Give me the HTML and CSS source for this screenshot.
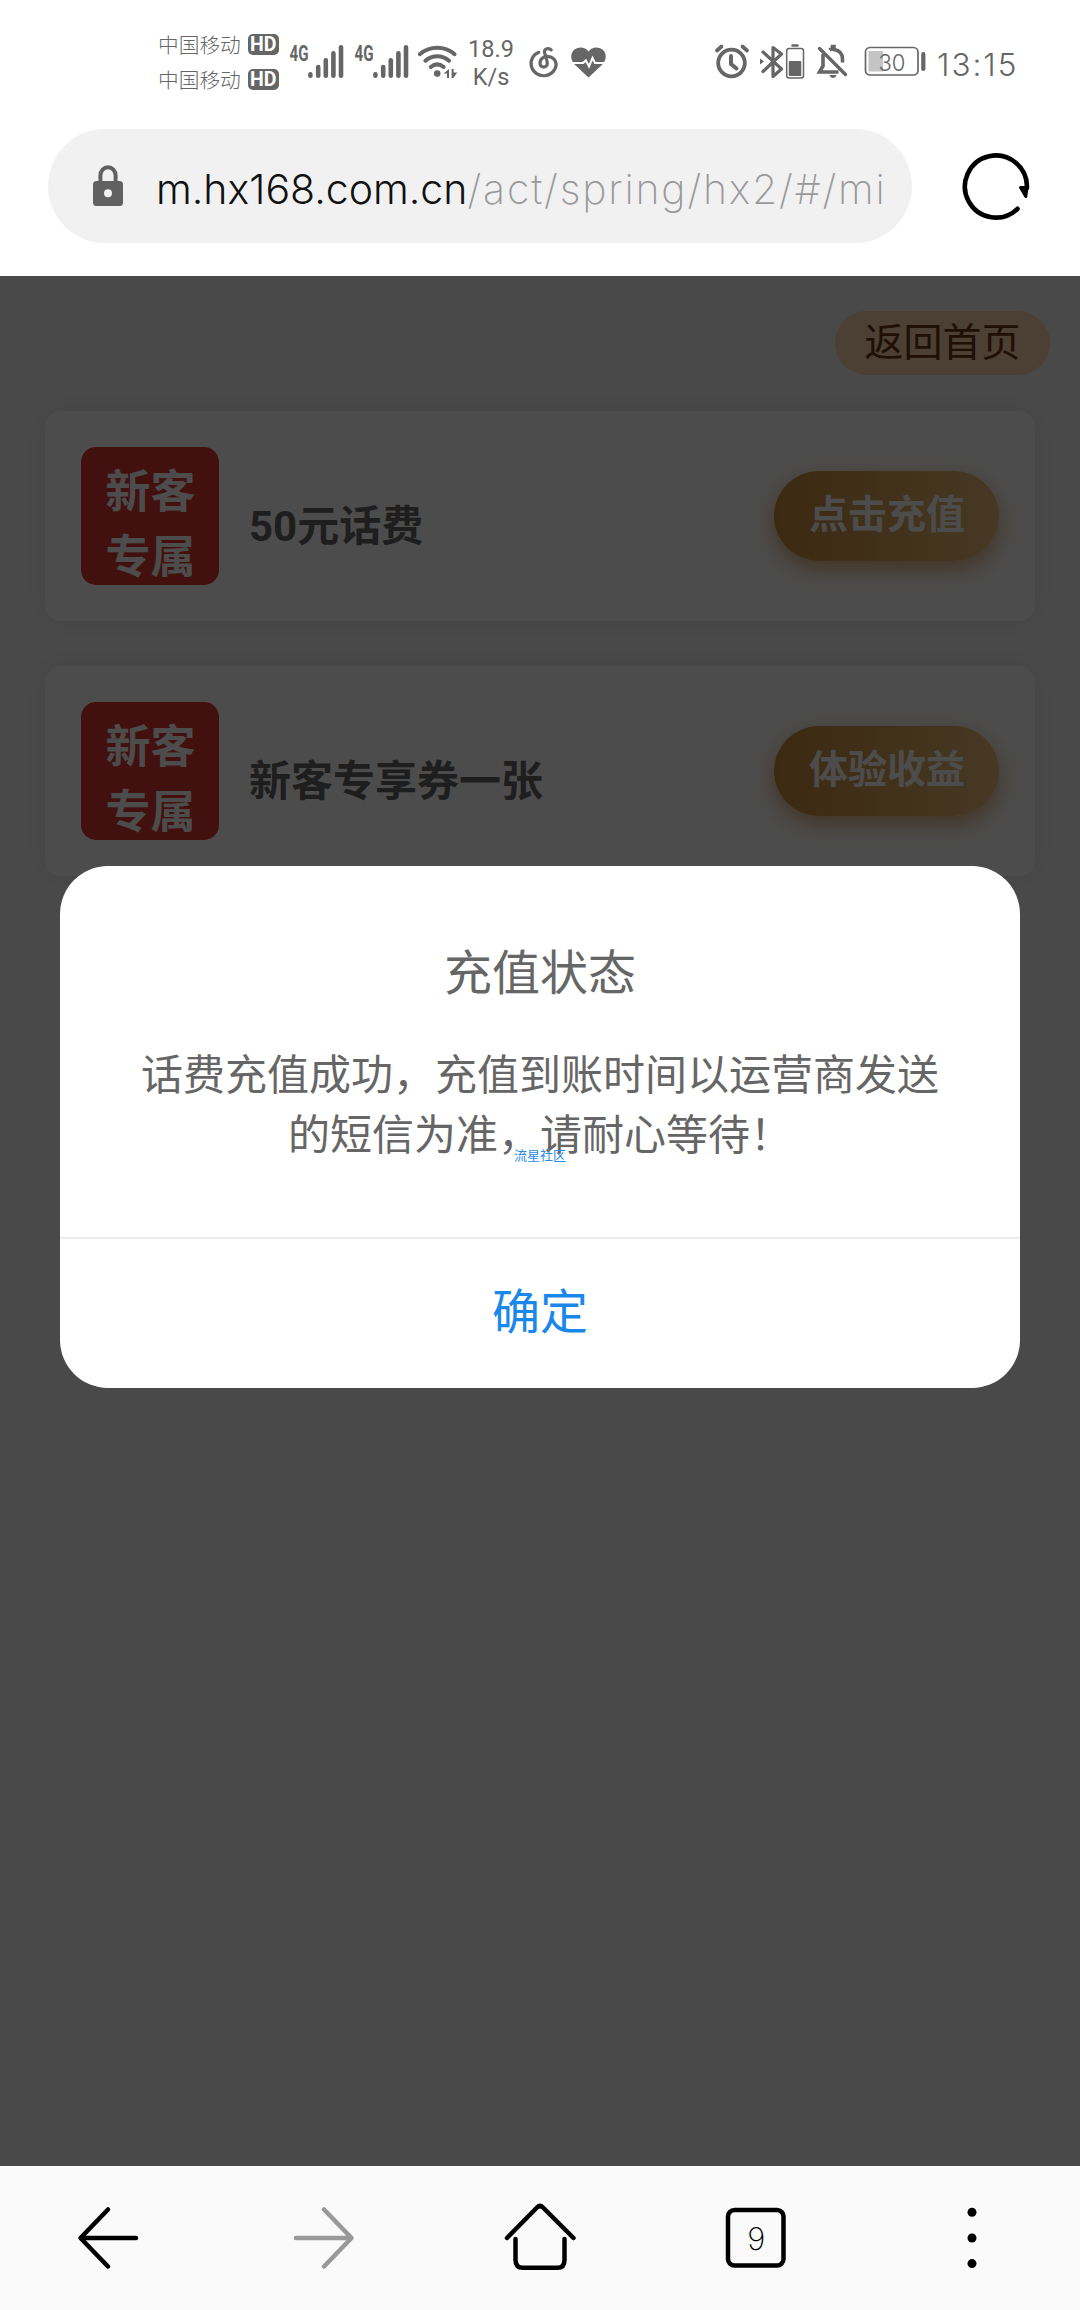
FILE: index.html
```html
<!DOCTYPE html>
<html lang="zh-CN">
<head>
<meta charset="utf-8">
<title>充值状态</title>
<link rel="stylesheet" href="styles.css">
</head>
<body>
<header class="status">
  <div class="carriers">
    <div class="carrier"><span>中国移动</span><b class="hd">HD</b></div>
    <div class="carrier"><span>中国移动</span><b class="hd">HD</b></div>
  </div>
  <svg class="net" width="65" height="110" viewBox="286 0 65 110">
    <text x="289.500" y="60.500" textLength="19" lengthAdjust="spacingAndGlyphs" class="gen">4G</text>
    <path d="M310.400 74.200v1.600M318.200 67v8.800M325.800 60.200v15.600M333.400 53.400v22.400M341 47.200v28.600" class="bars"/>
  </svg>
  <svg class="net" width="65" height="110" viewBox="286 0 65 110">
    <text x="289.500" y="60.500" textLength="19" lengthAdjust="spacingAndGlyphs" class="gen">4G</text>
    <path d="M310.400 74.200v1.600M318.200 67v8.800M325.800 60.200v15.600M333.400 53.400v22.400M341 47.200v28.600" class="bars"/>
  </svg>
  <svg width="44" height="110" viewBox="416 0 44 110">
    <g fill="none" stroke="#666" stroke-width="4" stroke-linecap="round">
      <path d="M419.800 54.200C430 45.600 444.500 45.600 454.600 54.200"/>
      <path d="M425.400 60.800c7-6 16.600-6 23.600 0"/>
      <path d="M430.800 67c4-3.300 8.800-3.300 12.800 0"/>
    </g>
    <circle cx="437.200" cy="73.600" r="3.300" fill="#666"/>
    <path d="M449 69v9h-2v-4.500h-3.500zM451.600 69v9h1.800l3.800-5.500h-3.600V69z" fill="#666"/>
  </svg>
  <div class="speed"><span>18.9</span><span>K/s</span></div>
  <svg width="100" height="110" viewBox="514 0 100 110">
    <path d="M551.200 49.800C549 47.600 544.200 48.400 544.500 52C544.700 55 547.300 59.500 547.300 63.200C547.300 68.400 540 68.400 540 63.200C540 58.600 544 56 548 56.300C553 56.700 556.200 60.500 556.200 64.600A12.600 12.200 0 1 1 538.800 52.300" fill="none" stroke="#666" stroke-width="3.200" stroke-linecap="round"/>
    <path d="M588.500 77.500L574.600 64.500C570 59.500 570.300 52.800 574.500 49.500C579 46 585.500 47 588.500 51.500C591.500 47 598 46 602.500 49.500C606.700 52.800 607 59.500 602.400 64.500Z" fill="#666"/>
    <path d="M571.500 63h11.500l2.800-2.600l3.200 6l3.500-8.400l2.500 5h10.500" fill="none" stroke="#fff" stroke-width="2"/>
  </svg>
  <svg class="tray" width="220" height="110" viewBox="712 0 220 110">
    <g fill="none" stroke="#666" stroke-linecap="round">
      <circle cx="731.500" cy="63" r="13.300" stroke-width="3.800"/>
      <path d="M731 56v8l5.500 4.500" stroke-width="4"/>
      <path d="M717 50.500l4.500-4M747 50.500l-4.500-4" stroke-width="3.800"/>
      <path d="M763 52l18.500 17L773 76.500V47.500l8.500 6.500L763 71.500" stroke-width="3.200" stroke-linejoin="round"/>
      <rect x="786.700" y="48.500" width="16.800" height="29.500" rx="2.500" stroke-width="1.500"/>
      <path d="M792.500 45.500h5" stroke-width="2.400"/>
      <path d="M823 54v12l-3.500 6h19M829.500 50c1-.8 2-1.200 3-1.200V46.500h1.500v3c6 1 8.500 5 8.500 9.500v3.500" stroke-width="3.600" stroke-linecap="butt"/>
      <path d="M819.500 48.500l26 26" stroke-width="3.400"/>
      <rect x="865.500" y="47.500" width="52.500" height="27.500" rx="4.500" stroke-width="1.700"/>
      <path d="M923.300 54v15" stroke-width="4.200"/>
    </g>
    <path d="M760 58.500l4 3l-4 3zM829.500 75h7c-1 4-6 4-7 0z" fill="#666"/>
    <rect x="788.800" y="61" width="12.500" height="15" rx="1" fill="#666"/>
    <rect x="868.500" y="51" width="14.500" height="20.500" fill="#c4c4c4"/>
    <text x="878.500" y="70.500" textLength="27" lengthAdjust="spacingAndGlyphs" class="level">30</text>
  </svg>
  <span class="clock">13:15</span>
</header>

<div class="toolbar">
  <div class="address">
    <svg width="30" height="42" viewBox="0 0 30 42">
      <path d="M7.400 20V11.500a7.600 8.300 0 0 1 15.200 0V20" fill="none" stroke="#616161" stroke-width="4"/>
      <rect y="17" width="30" height="25" rx="3.500" fill="#616161"/>
      <circle cx="15" cy="29.300" r="4" fill="#f1f1f1"/>
    </svg>
    <div class="url"><span class="host">m.hx168.com.cn</span><span class="path">/act/spring/hx2/#/mi</span></div>
  </div>
  <svg class="reload" width="72" height="72" viewBox="960 150 72 72">
    <path d="M1017.500 208.800A31 31 0 1 1 1026.900 188" fill="none" stroke="#000" stroke-width="4.600" stroke-linecap="round"/>
    <path d="M1020.500 187.500H1027L1025.800 196.500Z" fill="#000" stroke="#000" stroke-width="3" stroke-linejoin="round"/>
  </svg>
</div>

<main class="page">
  <a class="back-home">返回首页</a>
  <section class="card">
    <div class="badge">新客<br>专属</div>
    <h2 class="card-title">50元话费</h2>
    <button class="action">点击充值</button>
  </section>
  <section class="card">
    <div class="badge">新客<br>专属</div>
    <h2 class="card-title">新客专享券一张</h2>
    <button class="action">体验收益</button>
  </section>
  <div class="overlay">
    <div class="dialog">
      <div class="dialog-title">充值状态</div>
      <p class="dialog-text">话费充值成功，充值到账时间以运营商发送的短信为准，请耐心等待！</p>
      <span class="watermark">流星社区</span>
      <div class="confirm">确定</div>
    </div>
  </div>
</main>

<nav class="nav">
  <svg viewBox="0 0 216 144"><path d="M108 43.500L80.500 72L108 100.500M81 72H136" /></svg>
  <svg class="off" viewBox="216 0 216 144"><path d="M324 43.500L351.500 72L324 100.500M351 72H296"/></svg>
  <svg viewBox="432 0 216 144"><path d="M507 72L537 41.500Q540 38.500 543 41.500L573.500 72M515.500 73V94Q515.500 101.800 523 101.800H557.500Q564.500 101.800 564.500 94V73"/></svg>
  <svg viewBox="648 0 216 144"><rect x="728" y="44" width="55.500" height="55.500" rx="6.500"/><text x="756.300" y="83.500" text-anchor="middle" class="tabs">9</text></svg>
  <svg viewBox="864 0 216 144"><g class="dots"><circle cx="972" cy="46.300" r="4.500"/><circle cx="972" cy="72" r="4.500"/><circle cx="972" cy="97.600" r="4.500"/></g></svg>
</nav>
</body>
</html>
```
FILE: styles.css
```css
* { box-sizing: border-box; }

body {
  margin: 0;
  width: 1080px;
  height: 2310px;
  display: flex;
  flex-direction: column;
  background: #fff;
  font-family: Roboto, "Noto Sans CJK SC", sans-serif;
}

svg { display: block; flex: none; }

/* Status bar */
.status {
  height: 110px;
  display: flex;
  color: #666;
  padding-left: 158px;
}
.carriers {
  width: 128px;
  padding-top: 27px;
  display: flex;
  flex-direction: column;
}
.carrier {
  height: 35px;
  display: flex;
  align-items: center;
  gap: 7px;
  font: 300 20.7px/35px "Noto Sans CJK SC", sans-serif;
}
.hd {
  width: 31px;
  height: 21px;
  border-radius: 5px;
  background: #666;
  color: #fff;
  font: 700 19.5px/21px Roboto, sans-serif;
  text-align: center;
}
.gen { font: 700 22px Roboto, sans-serif; fill: #666; }
.bars { stroke: #666; stroke-width: 4.6; stroke-linecap: round; }
.speed {
  width: 54px;
  padding-top: 34.5px;
  display: flex;
  flex-direction: column;
  align-items: center;
  padding-left: 8px;
  font: 400 23.5px/28px Roboto, sans-serif;
}
.tray { margin-left: 98px; }
.level { font: 300 23px Inter, sans-serif; fill: #666; }
.clock {
  margin-left: 5px;
  padding-top: 45px;
  font: 300 31.5px/40px Inter, sans-serif;
  letter-spacing: 2px;
}

/* Address bar */
.toolbar {
  height: 166px;
  display: flex;
  padding: 19px 48px 0;
}
.address {
  width: 864px;
  height: 114px;
  border-radius: 57px;
  background: #f1f1f1;
  display: flex;
  align-items: center;
  padding-left: 45px;
}
.address svg { margin-bottom: 2px; }
.url {
  margin-left: 33px;
  padding-top: 5px;
  font: 300 41px/60px Inter, sans-serif;
  white-space: nowrap;
}
.host { color: #111; }
.path { color: #999; font-weight: 250; letter-spacing: 1.85px; }
.reload { margin: 21px 0 0 48px; }

/* Page */
.page {
  position: relative;
  height: 1890px;
  padding: 35px 45px 0;
  background: #f5f5f5;
  display: flex;
  flex-direction: column;
}
.back-home {
  align-self: flex-end;
  width: 215px;
  height: 64px;
  margin: 0 -15px 36px 0;
  border-radius: 32px;
  background: #fdd2aa;
  color: #6b3310;
  font-size: 39px;
  line-height: 64px;
  text-align: center;
}
.card {
  height: 210px;
  margin-bottom: 45px;
  padding: 36px;
  border-radius: 15px;
  background: #fff;
  box-shadow: 0 0 30px rgba(0, 0, 0, .08);
  display: flex;
  align-items: flex-start;
}
.badge {
  width: 138px;
  height: 138px;
  padding: 13px 0 0 1px;
  border-radius: 15px;
  background: #dc3932;
  color: #fff;
  font-weight: 700;
  font-size: 45px;
  line-height: 65px;
  text-align: center;
}
.card-title {
  flex: 1;
  margin: 49px 0 0 30px;
  color: #666;
  font-weight: 700;
  font-size: 42px;
  line-height: 62px;
}
.action {
  width: 225px;
  height: 90px;
  margin-top: 24px;
  padding: 0 0 2px 1px;
  border: 0;
  border-radius: 45px;
  background: linear-gradient(90deg, #c88a3c, #ecbe78);
  box-shadow: 0 8px 22px rgba(200, 125, 45, .65);
  color: #fff;
  font: 700 39px/88px Roboto, "Noto Sans CJK SC", sans-serif;
}

/* Dialog */
.overlay {
  position: absolute;
  inset: 0;
  background: rgba(0, 0, 0, .7);
  display: flex;
  justify-content: center;
  align-items: flex-start;
  padding-top: 590px;
}
.dialog {
  position: relative;
  width: 960px;
  height: 522px;
  border-radius: 48px;
  background: #fff;
  color: #666;
  text-align: center;
  display: flex;
  flex-direction: column;
}
.dialog-title {
  padding-top: 72px;
  font-size: 48px;
  line-height: 72px;
}
.dialog-text {
  margin: 36px 75px 0;
  flex: 1;
  font-size: 42px;
  line-height: 60px;
}
.watermark {
  position: absolute;
  left: 454px;
  top: 281px;
  color: #2a8be6;
  font-size: 13px;
  line-height: 18px;
}
.confirm {
  height: 151px;
  border-top: 2px solid #ededed;
  color: #1a87ea;
  font-size: 48px;
  line-height: 147px;
}

/* Bottom navigation */
.nav {
  height: 144px;
  display: flex;
  background: #fafafa;
}
.nav svg {
  width: 216px;
  height: 144px;
  fill: none;
  stroke: #000;
  stroke-width: 4.5;
  stroke-linecap: round;
  stroke-linejoin: round;
}
.nav .off { stroke: #999; }
.nav .tabs { font: 200 31px Inter, sans-serif; fill: #000; stroke: none; }
.nav .dots { fill: #000; stroke: none; }
```
